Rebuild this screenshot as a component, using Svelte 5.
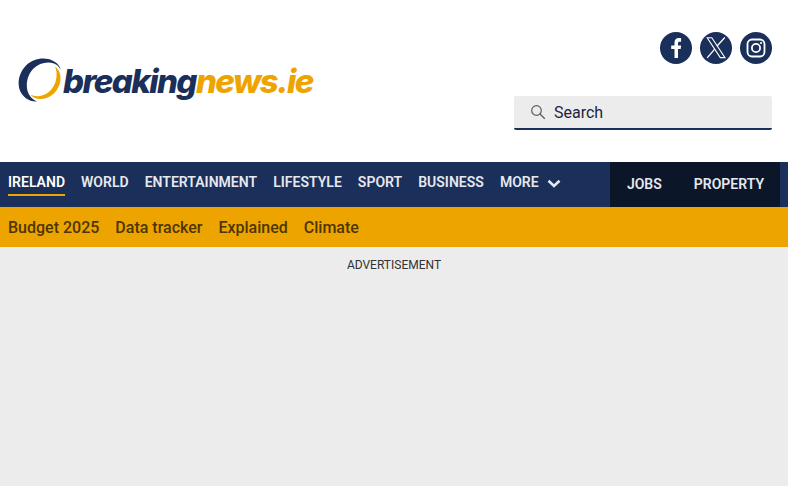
<script>
  const nav = ['IRELAND', 'WORLD', 'ENTERTAINMENT', 'LIFESTYLE', 'SPORT', 'BUSINESS'];
  const sub = ['Budget 2025', 'Data tracker', 'Explained', 'Climate'];
</script>

<div class="page">
  <header class="top">
    <a class="logo" href="#top">
      <svg class="mark" width="46" height="46" viewBox="0 0 46 46" aria-hidden="true">
        <path fill="#1a2f5a" d="M37 4C29 -1.500 16 -0.500 8 7.500 C0 15.500 -1.500 28 3.500 35.500 C7 40.500 12 43.800 19 43.500 C14.500 41.500 11 38 9.500 33 C7.500 25 10 16 15.500 10.500 C21 5 29.500 3 36 5.500 C38.800 6.600 41 8.500 42.800 12 C42 8.500 40 6 37 4Z"/>
        <path fill="#eea400" d="M37 8.500C42 12 44 19 41.500 26.500C38.500 35.500 30 41.500 21.500 41C17 40.800 14 38.800 12.500 36.500C15 38 18.500 38.600 22 38C29.500 36.800 35 31 37.500 24C39.200 18 39 12.500 37 8.500Z"/>
      </svg>
      <span class="word"><span class="b">breaking</span><span class="n">news.ie</span></span>
    </a>
    <div class="tools">
      <div class="social">
        <a href="#f" aria-label="Facebook">
          <svg viewBox="0 0 32 32" width="32" height="32"><circle cx="16" cy="16" r="16" fill="#1a2f5a"/><path fill="#fff" d="M18 26v-9h2.700l.4-3.400H18v-2.100c0-1.100.3-1.700 1.600-1.700h1.500V6.200c-.5-.1-1.300-.2-2.300-.2-2.600 0-4.300 1.600-4.300 4.600v3h-3.300V17h3.300v9z"/></svg>
        </a>
        <a href="#x" aria-label="X">
          <svg viewBox="0 0 32 32" width="32" height="32"><circle cx="16" cy="16" r="16" fill="#1a2f5a"/><path fill="none" stroke="#fff" stroke-width="1.100" d="M7.200 5.800h4.600l13.200 19.800h-4.700z"/><path fill="none" stroke="#fff" stroke-width="1.300" d="M24.800 5.500l-7.900 8.800M14.900 16.800L7.200 25.800"/></svg>
        </a>
        <a href="#i" aria-label="Instagram">
          <svg viewBox="0 0 32 32" width="32" height="32"><circle cx="16" cy="16" r="16" fill="#1a2f5a"/><rect x="7.500" y="7.500" width="17" height="17" rx="4.500" fill="none" stroke="#fff" stroke-width="1.800"/><circle cx="16" cy="16" r="4.100" fill="none" stroke="#fff" stroke-width="1.800"/><circle cx="21" cy="11" r="1.100" fill="#fff"/></svg>
        </a>
      </div>
      <div class="search">
        <svg width="16" height="16" viewBox="0 0 16 16" aria-hidden="true"><circle cx="6.500" cy="6.500" r="4.800" fill="none" stroke="#5c5c5c" stroke-width="1.200"/><path d="M10 10l4.800 4.800" stroke="#5c5c5c" stroke-width="1.300"/></svg>
        <span>Search</span>
      </div>
    </div>
  </header>

  <nav class="main">
    <ul class="links">
      {#each nav as item, i}
        <li class:active={i === 0}>{item}</li>
      {/each}
      <li class="more">MORE
        <svg width="14" height="9" viewBox="0 0 14 9" aria-hidden="true"><path d="M1.500 1.800L7 7l5.500-5.200" fill="none" stroke="#e6e9ef" stroke-width="2.600"/></svg>
      </li>
    </ul>
    <div class="extra">
      <span>JOBS</span>
      <span>PROPERTY</span>
    </div>
  </nav>

  <nav class="sub">
    {#each sub as item}<span>{item}</span>{/each}
  </nav>

  <main class="content">
    <p>ADVERTISEMENT</p>
  </main>
</div>

<style>
  :global(body) {
    margin: 0;
    background: #fff;
    font-family: Roboto, "Liberation Sans", sans-serif;
  }
  .page {
    width: 788px;
    height: 486px;
    display: flex;
    flex-direction: column;
    overflow: hidden;
  }
  .top {
    height: 162px;
    box-sizing: border-box;
    display: flex;
    justify-content: space-between;
    padding: 32px 16px 0 18px;
  }
  .logo {
    display: flex;
    align-items: center;
    height: 46px;
    margin-top: 26px;
    text-decoration: none;
  }
  .mark { flex: none; }
  .word {
    font-family: Inter, sans-serif;
    font-weight: 800;
    font-style: italic;
    font-size: 33px;
    letter-spacing: -1.6px;
    line-height: 46px;
    margin-left: -1px;
  }
  .b { color: #1a2f5a; }
  .n { color: #eea400; }
  .tools {
    display: flex;
    flex-direction: column;
    align-items: flex-end;
  }
  .social {
    display: flex;
    gap: 8px;
  }
  .social a { display: block; height: 32px; }
  .search {
    margin-top: 32px;
    width: 258px;
    height: 34px;
    box-sizing: border-box;
    background: #ececec;
    border-bottom: 2px solid #1a2f5a;
    border-radius: 2px;
    display: flex;
    align-items: center;
    gap: 8px;
    padding-left: 16px;
    color: #1b2540;
    font-size: 16px;
  }
  .main {
    height: 45px;
    background: #1a2f5a;
    display: flex;
    justify-content: space-between;
    padding: 0 8px;
  }
  .links {
    list-style: none;
    margin: 0;
    padding: 0;
    display: flex;
    gap: 16px;
    color: #e6e9ef;
    font-size: 14px;
    font-weight: 600;
    letter-spacing: 0.02px;
    line-height: 24px;
    padding-top: 8px;
  }
  .links li { height: 24px; white-space: nowrap; }
  .links .active {
    color: #fff;
    border-bottom: 2px solid #eea400;
  }
  .more { display: flex; align-items: center; gap: 8px; }
  .more svg { margin-top: 3px; }
  .extra {
    background: #0c1629;
    width: 170px;
    display: flex;
    align-items: center;
    justify-content: flex-end;
    gap: 32px;
    padding: 0 16px 1px 0;
    box-sizing: border-box;
    color: #e6e9ef;
    font-size: 14px;
    font-weight: 600;
  }
  .sub {
    height: 40px;
    background: #eea400;
    display: flex;
    align-items: center;
    gap: 16px;
    padding: 0 8px;
    color: #4d3600;
    font-size: 16px;
    font-weight: 500;
  }
  .content {
    flex: 1;
    background: #ececec;
  }
  .content p {
    margin: 11px 0 0;
    text-align: center;
    font-size: 12px;
    line-height: 14px;
    color: #333;
  }
</style>
